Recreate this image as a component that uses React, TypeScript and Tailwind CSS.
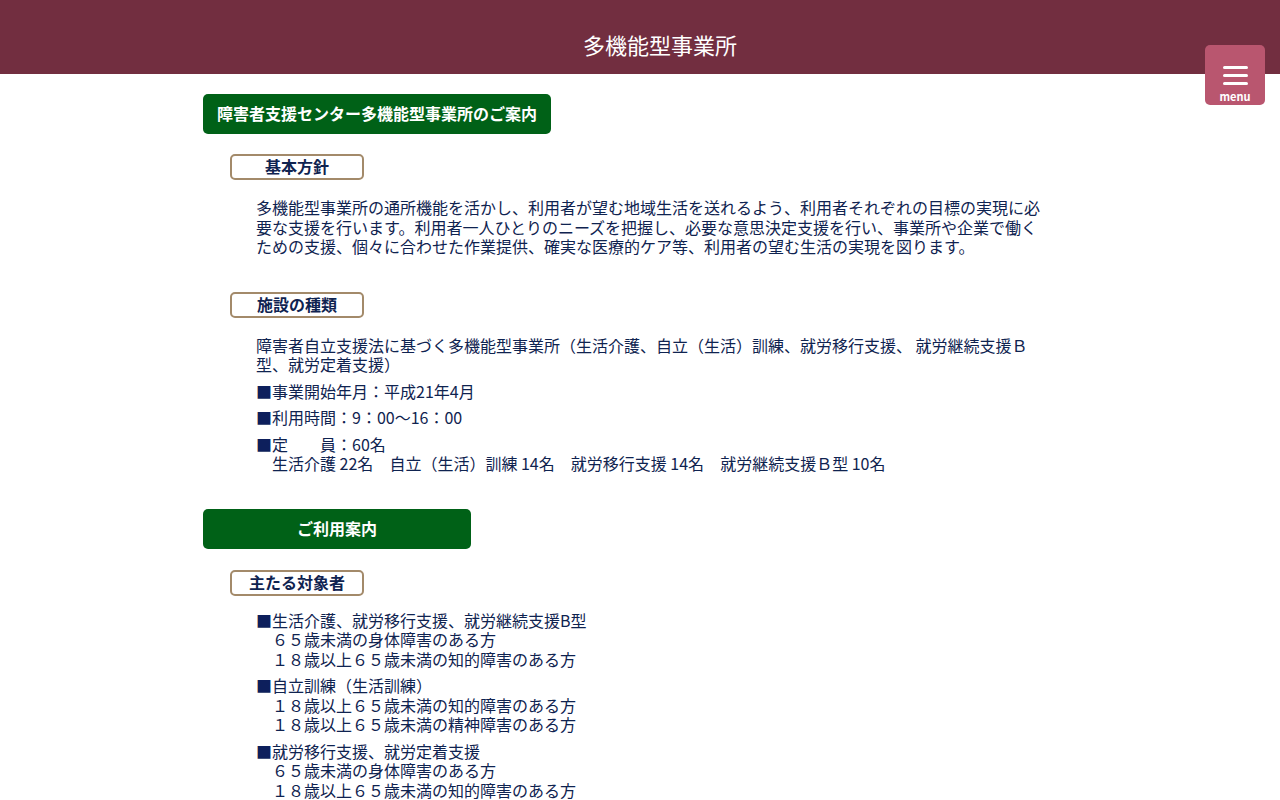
import React from "react";

const FONT = '"Noto Sans CJK JP", "Noto Sans", sans-serif';
const SP = "\u3000";

function SectionTitle({ children, wide }: { children: React.ReactNode; wide?: boolean }) {
  return (
    <div
      className={
        "h-[40px] rounded-[5px] bg-[#006117] text-white font-bold text-[16px] flex items-center " +
        (wide ? "w-[268px] justify-center" : "w-fit px-[14px]")
      }
    >
      {children}
    </div>
  );
}

function SubTitle({ children }: { children: React.ReactNode }) {
  return (
    <div className="ml-[27px] w-[134px] h-[26px] border-2 border-[#a38a6a] rounded-[5px] flex items-center justify-center text-[16px] font-bold text-[#0f2350]">
      {children}
    </div>
  );
}

function Sq() {
  return <span className="text-[#0d1f5c]">■</span>;
}

export default function App() {
  return (
    <div className="min-h-screen bg-white" style={{ fontFamily: FONT }}>
      {/* top bar */}
      <header className="relative h-[74px] bg-[#722e40] flex justify-center">
        <h1 className="pt-[28px] pl-[40px] text-[22px] leading-[32px] text-white">多機能型事業所</h1>
        <button className="absolute right-[15px] top-[45px] w-[60px] h-[60px] rounded-[5px] bg-[#b9566f] flex flex-col items-center pt-[21px]">
          <span className="block w-[25px] h-[3px] bg-white rounded-sm" />
          <span className="block w-[25px] h-[3px] bg-white rounded-sm mt-[5px]" />
          <span className="block w-[25px] h-[3px] bg-white rounded-sm mt-[5px]" />
          <span className="text-white text-[11px] font-bold leading-[14px] mt-[4px]">menu</span>
        </button>
      </header>

      <main className="w-[874px] mx-auto pt-[20px] pb-10 text-[#0f2350] text-[16px] leading-[19.5px]">
        <SectionTitle>障害者支援センター多機能型事業所のご案内</SectionTitle>

        <div className="mt-[20px]">
          <SubTitle>基本方針</SubTitle>
        </div>
        <p className="ml-[53px] mr-[30px] mt-[18px]">
          多機能型事業所の通所機能を活かし、利用者が望む地域生活を送れるよう、利用者それぞれの目標の実現に必要な支援を行います。利用者一人ひとりのニーズを把握し、必要な意思決定支援を行い、事業所や企業で働くための支援、個々に合わせた作業提供、確実な医療的ケア等、利用者の望む生活の実現を図ります。
        </p>

        <div className="mt-[35px]">
          <SubTitle>施設の種類</SubTitle>
        </div>
        <div className="ml-[53px] mr-[30px] mt-[18px] flex flex-col gap-[7px]">
          <p>
            障害者自立支援法に基づく多機能型事業所（生活介護、自立（生活）訓練、就労移行支援、 就労継続支援Ｂ型、就労定着支援）
          </p>
          <p>
            <Sq />事業開始年月：平成21年4月
          </p>
          <p>
            <Sq />利用時間：9：00～16：00
          </p>
          <p>
            <Sq />定{SP}{SP}員：60名
            <br />
            {SP}生活介護 22名{SP}自立（生活）訓練 14名{SP}就労移行支援 14名{SP}就労継続支援Ｂ型 10名
          </p>
        </div>

        <div className="mt-[35px]">
          <SectionTitle wide>ご利用案内</SectionTitle>
        </div>

        <div className="mt-[21px]">
          <SubTitle>主たる対象者</SubTitle>
        </div>
        <div className="ml-[53px] mr-[30px] mt-[15px] flex flex-col gap-[7px]">
          <p>
            <Sq />生活介護、就労移行支援、就労継続支援B型
            <br />
            {SP}６５歳未満の身体障害のある方
            <br />
            {SP}１８歳以上６５歳未満の知的障害のある方
          </p>
          <p>
            <Sq />自立訓練（生活訓練）
            <br />
            {SP}１８歳以上６５歳未満の知的障害のある方
            <br />
            {SP}１８歳以上６５歳未満の精神障害のある方
          </p>
          <p>
            <Sq />就労移行支援、就労定着支援
            <br />
            {SP}６５歳未満の身体障害のある方
            <br />
            {SP}１８歳以上６５歳未満の知的障害のある方
          </p>
        </div>
      </main>
    </div>
  );
}
